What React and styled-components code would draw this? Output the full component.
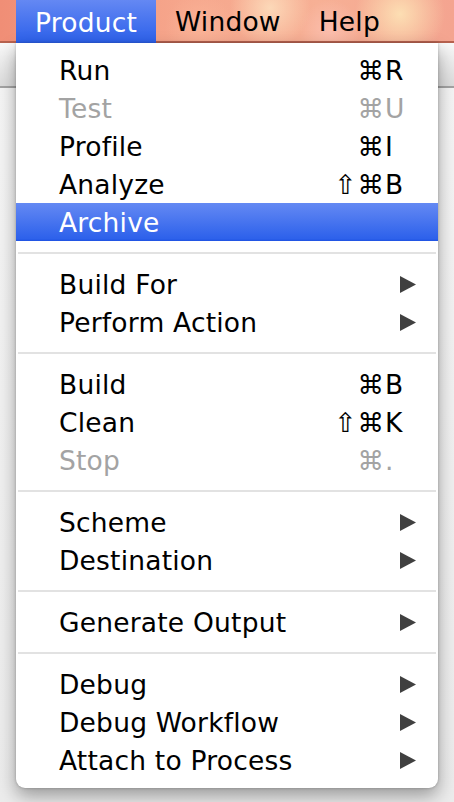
import React from 'react';
import styled, { createGlobalStyle } from 'styled-components';

const GlobalStyle = createGlobalStyle`
  html, body {
    margin: 0;
    padding: 0;
    width: 454px;
    height: 802px;
    overflow: hidden;
  }
  body {
    font-family: "DejaVu Sans", "Liberation Sans", sans-serif;
  }
`;

const Screen = styled.div`
  position: relative;
  width: 454px;
  height: 802px;
  background: linear-gradient(#f6f6f6, #ececec);
`;

const MenuBar = styled.div`
  height: 41px;
  display: flex;
  align-items: stretch;
  padding-left: 16px;
  border-bottom: 2px solid #b7624f;
  background:
    radial-gradient(circle at 270px 8px, rgba(255, 235, 200, 0.7), transparent 40px),
    radial-gradient(circle at 400px 14px, rgba(255, 240, 190, 0.75), transparent 45px),
    radial-gradient(circle at 330px 30px, rgba(255, 200, 190, 0.6), transparent 30px),
    radial-gradient(circle at 200px 28px, rgba(255, 190, 160, 0.5), transparent 35px),
    linear-gradient(90deg, #f08e76, #f6a68c 40%, #f7b095 70%, #f4a490);
`;

const MenuTitle = styled.div`
  display: flex;
  align-items: center;
  padding: 2px 19px 0;
  font-size: 26.5px;
  letter-spacing: 0.2px;
  color: ${p => (p.$active ? '#fff' : '#000')};
  background: ${p => (p.$active ? 'linear-gradient(#6488f3, #2c60ea)' : 'transparent')};
  margin-bottom: ${p => (p.$active ? '-2px' : '0')};
`;

const WindowToolbar = styled.div`
  height: 43px;
  border-bottom: 2px solid #a3a3a3;
  background: linear-gradient(#f9f9f9, #dcdcdc);
`;

const Menu = styled.div`
  position: absolute;
  top: 43px;
  left: 16px;
  width: 422px;
  padding: 8px 0 9px;
  box-sizing: border-box;
  background: #fff;
  border-radius: 0 0 9px 9px;
  box-shadow: 0 8px 18px rgba(0, 0, 0, 0.35), 0 0 3px rgba(0, 0, 0, 0.25);
`;

const Item = styled.div`
  height: 38px;
  display: flex;
  align-items: center;
  padding: 0 22px 0 43px;
  font-size: 26.5px;
  letter-spacing: 0.2px;
  color: ${p => (p.$disabled ? '#a3a3a3' : p.$active ? '#fff' : '#000')};
  background: ${p => (p.$active ? 'linear-gradient(#6489f3, #2d61eb 94%, #1e52e2)' : 'transparent')};
`;

const Label = styled.span`
  flex: 1;
  white-space: nowrap;
`;

const Shortcut = styled.span`
  display: flex;
  align-items: center;
  margin-right: 6px;
`;

const Mods = styled.span`
  display: inline-block;
  text-align: right;
  white-space: nowrap;
  letter-spacing: 1px;
`;

const Key = styled.span`
  display: inline-block;
  width: 25px;
`;

const Separator = styled.div`
  height: 2px;
  margin: 11px 2px;
  background: #e2e2e2;
`;

const Arrow = () => (
  <svg width="16" height="17" viewBox="0 0 16 17">
    <polygon points="0,0 16,8.5 0,17" fill="#404040" />
  </svg>
);

const sections = [
  [
    { label: 'Run', mods: '\u2318', key: 'R' },
    { label: 'Test', mods: '\u2318', key: 'U', disabled: true },
    { label: 'Profile', mods: '\u2318', key: 'I' },
    { label: 'Analyze', mods: '\u21E7\u2318', key: 'B' },
    { label: 'Archive', active: true },
  ],
  [
    { label: 'Build For', sub: true },
    { label: 'Perform Action', sub: true },
  ],
  [
    { label: 'Build', mods: '\u2318', key: 'B' },
    { label: 'Clean', mods: '\u21E7\u2318', key: 'K' },
    { label: 'Stop', mods: '\u2318', key: '.', disabled: true },
  ],
  [
    { label: 'Scheme', sub: true },
    { label: 'Destination', sub: true },
  ],
  [{ label: 'Generate Output', sub: true }],
  [
    { label: 'Debug', sub: true },
    { label: 'Debug Workflow', sub: true },
    { label: 'Attach to Process', sub: true },
  ],
];

const App = () => (
  <Screen>
    <GlobalStyle />
    <MenuBar>
      <MenuTitle $active>Product</MenuTitle>
      <MenuTitle>Window</MenuTitle>
      <MenuTitle>Help</MenuTitle>
    </MenuBar>
    <WindowToolbar />
    <Menu>
      {sections.map((items, i) => (
        <React.Fragment key={i}>
          {i > 0 && <Separator />}
          {items.map(item => (
            <Item key={item.label} $disabled={item.disabled} $active={item.active}>
              <Label>{item.label}</Label>
              {item.key && (
                <Shortcut>
                  <Mods>{item.mods}</Mods>
                  <Key>{item.key}</Key>
                </Shortcut>
              )}
              {item.sub && <Arrow />}
            </Item>
          ))}
        </React.Fragment>
      ))}
    </Menu>
  </Screen>
);

export default App;
